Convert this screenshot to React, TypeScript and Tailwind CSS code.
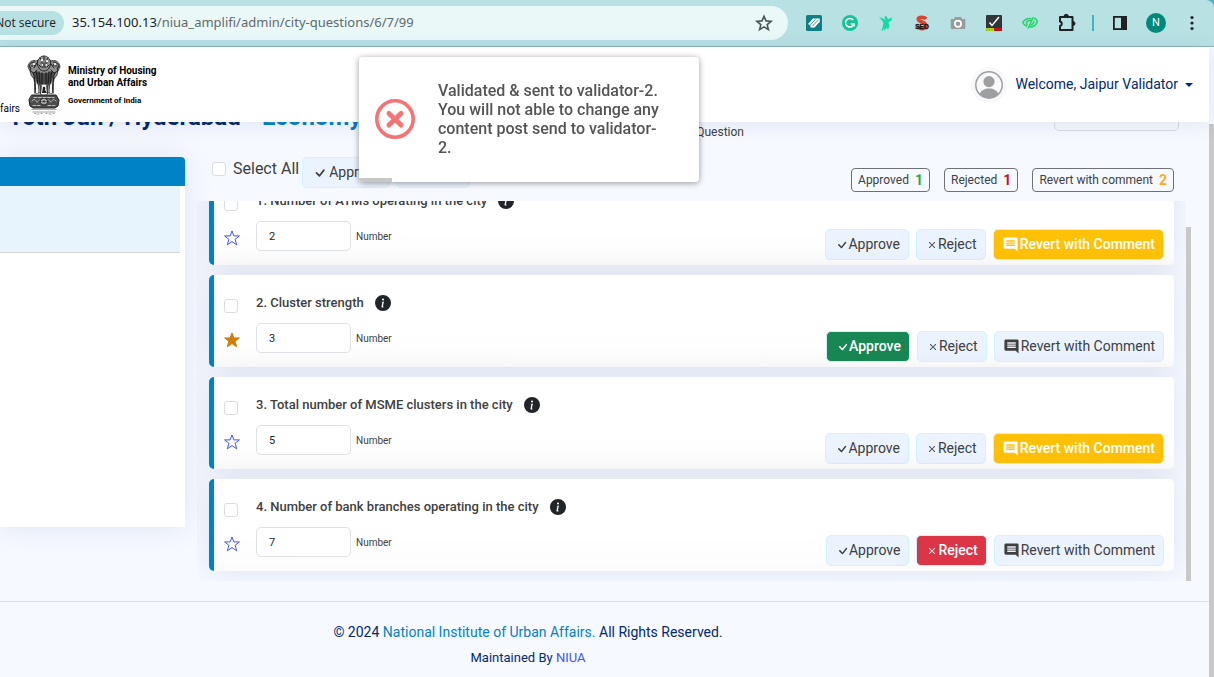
import React from "react";
import { BsCheck, BsX, BsInfoCircleFill } from "react-icons/bs";
import { MdComment } from "react-icons/md";

type Status = "approved" | "rejected" | "reverted";

interface Question {
  id: number;
  title: string;
  value: string;
  starred: boolean;
  status: Status;
}

const questions: Question[] = [
  { id: 1, title: "Number of ATMs operating in the city", value: "2", starred: false, status: "reverted" },
  { id: 2, title: "Cluster strength", value: "3", starred: true, status: "approved" },
  { id: 3, title: "Total number of MSME clusters in the city", value: "5", starred: false, status: "reverted" },
  { id: 4, title: "Number of bank branches operating in the city", value: "7", starred: false, status: "rejected" },
];

const idleButton = "border-[#cff4fc] bg-[#eaf3fe] text-[#404040]";
const checkbox =
  "block size-[14px] shrink-0 appearance-none rounded-[3px] border border-[#d9dce1] bg-white checked:bg-[#0082c6]";

function ExtensionCell({ label, children }: { label: string; children: React.ReactNode }) {
  return (
    <button type="button" aria-label={label} className="flex h-8 w-9 items-center justify-center">
      {children}
    </button>
  );
}

function BrowserBar() {
  return (
    <div className="bg-[#45b3bf]">
      <div className="flex h-[47px] items-center rounded-tr-lg border-b border-[#8db5b8] bg-[#b8e1e4] pr-1 font-['Noto_Sans',sans-serif]">
        <div className="flex h-[34px] min-w-0 flex-1 items-center rounded-r-full bg-[#ebf8f8] pr-3">
          <button
            type="button"
            className="flex h-6 w-16 shrink-0 items-center justify-end rounded-r-full bg-[#b8e1e4] pr-2 font-['Open_Sans',sans-serif] text-[12px] whitespace-nowrap text-[#202124]"
          >
            Not secure
          </button>
          <div className="ml-2 flex-1 truncate text-[13px] text-[#5f6b6d]">
            <span className="text-[#202124]">35.154.100.13</span>/niua_amplifi/admin/city-questions/6/7/99
          </div>
          <button type="button" aria-label="Bookmark this page">
            <svg viewBox="0 0 24 24" className="size-6" fill="none" stroke="#4b5557" strokeWidth="1.6">
              <path d="M12 5.2l2 4.7 5.1.4-3.9 3.3 1.2 5L12 15.900l-4.400 2.700 1.200-5-3.900-3.300 5.100-.4z" />
            </svg>
          </button>
        </div>
        <div className="ml-2 flex items-center">
          <ExtensionCell label="Reader">
            <svg viewBox="0 0 16 16" className="size-4">
              <rect width="16" height="16" rx="1.500" fill="#0e7f86" />
              <path d="M2 9L7 3.500 13.500 3.500 14 6.500 8.500 12.500 4.500 12.500 4.500 10.500z" fill="#fff" />
              <path d="M4 10.200L9.500 4.500M6.500 11L12.500 4.800" stroke="#0e7f86" strokeWidth=".8" />
            </svg>
          </ExtensionCell>
          <ExtensionCell label="Grammar checker">
            <svg viewBox="0 0 16 16" className="size-4">
              <circle cx="8" cy="8" r="8" fill="#15c39a" />
              <path d="M11.200 5a4.300 4.300 0 1 0 .8 4H8.800M12 8.400v3" fill="none" stroke="#fff" strokeWidth="1.500" />
            </svg>
          </ExtensionCell>
          <ExtensionCell label="Hummingbird">
            <svg viewBox="0 0 16 16" className="size-4" fill="#14dba5">
              <path d="M1 2l4 1.500L7.500 5 6.500 3 7 .5 9 2l1 2.500L12 3l3-.2-2 1.500 1.500 1-3 1-1 2 1 2.500-.5 1.500L10 15l-1-2-1 .5L6.500 16 6 13l-1.500 3-1-1L5 11l.5-3L4 5.500z" />
            </svg>
          </ExtensionCell>
          <ExtensionCell label="SEO tool">
            <svg viewBox="0 0 16 16" className="size-4">
              <path d="M12.200 3.800C11 2.300 5 1.300 4.300 3.800 4 7.500 11.500 6 11.800 10.500c0 4-6 4-8 1.500" fill="none" stroke="#dc4430" strokeWidth="3.600" />
              <text x="8" y="14" textAnchor="middle" fontSize="6.500" fontWeight="900" fontFamily="Liberation Sans, sans-serif" fill="#1a1212" stroke="#1a1212" strokeWidth=".4">
                SEO
              </text>
            </svg>
          </ExtensionCell>
          <ExtensionCell label="Screenshot">
            <svg viewBox="0 0 16 16" className="size-4">
              <path d="M5 2h6l1 2h2.500a.8.800 0 0 1 .8.800V13a1 1 0 0 1-1 1H1.700a1 1 0 0 1-1-1V4.800A.8.800 0 0 1 1.500 4H4z" fill="#979b9c" />
              <circle cx="8" cy="8.800" r="3.100" fill="none" stroke="#fff" strokeWidth="1.700" />
            </svg>
          </ExtensionCell>
          <ExtensionCell label="Checker">
            <svg viewBox="0 0 16 16" className="size-4">
              <rect width="16" height="16" rx="1" fill="#333638" />
              <path d="M0 13h8v3H1a1 1 0 0 1-1-1z" fill="#a4d21c" />
              <path d="M8 13h8v2a1 1 0 0 1-1 1H8z" fill="#c4121a" />
              <path d="M3.500 7.500l2.500 3L13 2" fill="none" stroke="#fff" strokeWidth="1.400" />
            </svg>
          </ExtensionCell>
          <ExtensionCell label="Visibility">
            <svg viewBox="0 0 16 16" className="size-4" fill="none" stroke="#25d366" strokeWidth="1.500">
              <path d="M9.500 3.700C5 3 2 5.500.8 7.500c.8 2 2.200 3.200 4.200 4M12 3.500c2.500 0 3 1.500 3.200 3-.7 3.500-4 5.500-7.700 5.500M11.500 2L6 13.500M9 5.500C6.500 5 4.500 6.500 4.500 8c0 .8.500 1.500 1.200 2M11.500 5.800C12.500 7 11 9.500 8.800 10" />
            </svg>
          </ExtensionCell>
          <ExtensionCell label="Extensions">
            <svg viewBox="0 0 20 20" className="size-5" fill="none" stroke="#202124" strokeWidth="2" strokeLinejoin="round">
              <path d="M4 4h12.500v13H4v-4a2.300 2.300 0 0 0 0-4.500z" />
              <path d="M8 3.500a2.200 2.200 0 0 1 4.400 0zM17 8.500a2 2 0 0 1 0 4z" fill="#202124" strokeWidth="1" />
            </svg>
          </ExtensionCell>
          <span className="mx-2 h-4 w-[2px] bg-[#45b3bf]" />
          <ExtensionCell label="Side panel">
            <svg viewBox="0 0 16 16" className="size-4">
              <rect x="1.900" y="1.900" width="12.200" height="12.200" fill="none" stroke="#202124" strokeWidth="1.800" />
              <rect x="9" y="1.900" width="5.500" height="12.200" fill="#202124" />
            </svg>
          </ExtensionCell>
          <ExtensionCell label="Profile">
            <span className="flex size-5 items-center justify-center rounded-full bg-[#00897b] font-[Roboto,sans-serif] text-[11px] text-white">
              N
            </span>
          </ExtensionCell>
          <ExtensionCell label="Menu">
            <svg viewBox="0 0 16 16" className="size-4" fill="#202124">
              <circle cx="8" cy="2.500" r="1.600" />
              <circle cx="8" cy="8" r="1.600" />
              <circle cx="8" cy="13.500" r="1.600" />
            </svg>
          </ExtensionCell>
        </div>
      </div>
    </div>
  );
}

function Emblem() {
  return (
    <svg viewBox="0 0 36 60" className="h-[60px] w-9 shrink-0" fill="none" stroke="#222" strokeLinecap="round">
      <path d="M13 4c1-4 9-4 10 0l2 2c5-2 9 2 9 6l-2 4-1 4-3 4-1 6-1 8H10l-1-8-1-6-3-4-1-4-2-4c0-4 4-8 9-6z" fill="#8f8f8f" strokeWidth=".8" strokeDasharray="2 1" />
      <path d="M11 16c3 3 11 3 14 0l3 2-2 8-4 3h-8l-4-3-2-8z" fill="#4a4a4a" stroke="none" />
      <g strokeWidth="1">
        <path d="M12 5c-1 3-1 5 1 8 1 2 3 3 5 3s4-1 5-3c2-3 2-5 1-8M14 3l2 3M18 1v4M22 3l-2 3M15 8h1.500M19.500 8H21M16 12h4M18 8v3M13 10l2 2M23 10l-2 2" />
        <path d="M9 7c-3 0-6 2-6 5l2 1-1 3 4 2 3-3M27 7c3 0 6 2 6 5l-2 1 1 3-4 2-3-3M5 11h2M29 11h2M11 8l-3 5M25 9l3 4M8 9l1 2M28 9l-1 2" />
        <path d="M7 18c2 3 1 6 2 9M10 17c2 4 1 8 2 12M13 17l1 13M16 18v11M20 18v11M23 17l-1 13M26 17c-2 4-1 8-2 12M29 18c-2 3-1 6-2 9" strokeWidth="1.300" strokeDasharray="3 1" />
        <path d="M9 29v9M12 30l-1 8M15 31v8M21 31v8M24 30l1 8M27 29v9" strokeWidth="1.400" />
      </g>
      <path d="M15 4h2v2h-2zM20 5h2v2h-2zM16 9h1v2h-1zM20 9h1v2h-1zM7 8h2v2H7zM28 8h2v2h-2z" fill="#e8e8e8" stroke="none" />
      <path d="M10 28l2 2v8h-2zM26 28l-2 2v8h2zM16 30h4l1 9h-6z" fill="#f4f4f4" stroke="none" />
      <path d="M17 32c2-1 3 1 2 3l2 3h-5z" fill="#222" stroke="none" />
      <path d="M6 40h24l3 5-1 6-3 2H7l-3-2-1-6z" fill="#4c4c4c" strokeWidth="1" />
      <circle cx="18" cy="46.500" r="3.600" fill="#ddd" strokeWidth="1" />
      <path d="M18 43v7M14.500 46.500h7M15.500 44l5 5M20.500 44l-5 5" strokeWidth=".6" />
      <path d="M6 46c1-2 3-2 4 0s2 1 3-1M23 45c1 2 2 3 3 1s2-2 4 0M8 42.500h20M7 50.500h7M22 50.500h7" stroke="#ddd" strokeWidth=".8" strokeDasharray="3 1.500" />
      <path d="M6 54.500h24" strokeWidth=".8" stroke="#999" />
      <path d="M7 57h22M8.500 58.500h1M11 59h2M15 58.500h1M20 58.500h1M23 59h2M27 58.500h1" stroke="#888" strokeWidth=".8" />
    </svg>
  );
}

function PageHeader() {
  return (
    <header className="relative z-10 flex h-[75px] items-center bg-white pr-4 shadow-[0_2px_20px_rgba(1,41,112,0.1)]">
      <div className="flex h-full items-start pt-2 text-black">
        <span className="mt-[46px] flex w-5 justify-end text-[10px] leading-4">fairs</span>
        <span className="ml-[6px]">
          <Emblem />
        </span>
        <div className="ml-[6px] pt-[10px] text-[10px] leading-3 font-bold whitespace-nowrap">
          <p>Ministry of Housing</p>
          <p>and Urban Affairs</p>
          <p className="mt-[6px] text-[8px] leading-3">Government of India</p>
        </div>
      </div>
      <button type="button" className="ml-auto flex items-center text-[14px] text-[#012970]">
        <span className="mr-2 flex size-9 items-center justify-center rounded-full bg-[#f6f8fb]">
          <svg viewBox="0 0 28 28" className="size-7">
            <circle cx="14" cy="14" r="13.200" fill="#fafafa" stroke="#9e9fa1" strokeWidth="1.500" />
            <circle cx="14" cy="10.600" r="5.600" fill="#9e9fa1" />
            <path d="M4.500 23c2.500-7.500 16.500-7.500 19 0a13 13 0 0 1-19 0z" fill="#9e9fa1" />
          </svg>
        </span>
        Welcome, Jaipur Validator
        <span className="ml-[7px] border-x-4 border-t-4 border-x-transparent border-t-[#012970]" />
      </button>
    </header>
  );
}

function StatusButton({ active, tone, children }: { active: boolean; tone: string; children: React.ReactNode }) {
  return (
    <button
      type="button"
      className={`flex h-[31px] items-center rounded-[5px] border px-2 text-[14px] whitespace-nowrap ${active ? tone : idleButton}`}
    >
      {children}
    </button>
  );
}

function QuestionCard({ q }: { q: Question }) {
  const field = `question-${q.id}`;
  return (
    <li className="flex h-[92px] rounded-[5px] border-l-[5px] border-[#0082c6] bg-linear-to-b from-white from-60% to-[#fcfcfc] pr-[10px] pl-[10px] shadow-[0_0_30px_rgba(1,41,112,0.1)]">
      <div className="flex w-4 flex-col pt-6">
        <input type="checkbox" aria-label={`Select question ${q.id}`} className={checkbox} />
        <button type="button" aria-label="Mark as important" className="mt-[19px]">
          <svg viewBox="0 0 16 16" className="size-4">
            <path
              d="M8 .9l1.900 5h5.500l-4.300 3.400 1.600 5.500L8 11.600l-4.700 3.200 1.600-5.500L.6 5.900h5.500z"
              fill={q.starred ? "#cf7d05" : "none"}
              stroke={q.starred ? "#cf7d05" : "#4154f1"}
              strokeWidth="1"
            />
          </svg>
        </button>
      </div>
      <div className="ml-4 flex-1 pt-5">
        <div className="flex h-4 items-center">
          <label htmlFor={field} className="text-[13px] font-medium text-[#404040]">
            {q.id}. {q.title}
          </label>
          <button type="button" aria-label="More information" className="ml-[11px]">
            <BsInfoCircleFill className="size-4 text-[#212529]" />
          </button>
        </div>
        <div className="mt-3 flex items-center">
          <input
            id={field}
            type="text"
            defaultValue={q.value}
            className="h-[30px] w-[95px] rounded-[5px] border border-[#dee2e6] bg-white px-3 text-[11px] text-[#212529]"
          />
          <span className="ml-[5px] text-[10px] text-[#404040]">Number</span>
        </div>
      </div>
      <div className="flex items-end gap-[7px] pb-[5px]">
        <StatusButton active={q.status === "approved"} tone="border-[#cff4fc] bg-[#198754] text-white font-medium">
          <BsCheck className="-mr-[2px] size-4" />
          Approve
        </StatusButton>
        <StatusButton active={q.status === "rejected"} tone="border-[#cff4fc] bg-[#dc3545] text-white font-medium">
          <BsX className="-mr-px size-[14px]" />
          Reject
        </StatusButton>
        <StatusButton active={q.status === "reverted"} tone="border-[#cff4fc] bg-[#ffc107] text-white font-medium">
          <MdComment className="mr-px size-[17px]" />
          Revert with Comment
        </StatusButton>
      </div>
    </li>
  );
}

function Tally({ label, count, color }: { label: string; count: number; color: string }) {
  return (
    <span className="flex h-6 items-center gap-[6px] rounded-[4px] border border-[#6f7275] px-[6px] text-[12px] whitespace-nowrap text-[#404040]">
      {label}
      <b className={`text-[14px] font-bold ${color}`}>{count}</b>
    </span>
  );
}

function Toast() {
  return (
    <div
      role="alert"
      className="fixed top-[57px] left-[359px] z-20 flex w-[340px] items-center overflow-hidden rounded-[4px] bg-white px-4 pt-6 pb-[25px] shadow-[0_1px_6px_rgba(0,0,0,0.4)]"
    >
      <svg viewBox="0 0 40 40" className="size-10 shrink-0" fill="none" stroke="#f57373" strokeLinecap="round">
        <circle cx="20" cy="20" r="18.200" strokeWidth="3.600" />
        <path d="M14 14.500l12 11.500M26 14.500L14 26" strokeWidth="5" />
      </svg>
      <p className="ml-[23px] w-[228px] text-[16px] leading-[19px] font-medium text-[#545454]">
        Validated &amp; sent to validator-2. You will not able to change any content post send to validator-2.
      </p>
      <span className="absolute bottom-0 left-0 h-1 w-[33px] bg-[#c7c7c7]" />
    </div>
  );
}

export default function App() {
  return (
    <div className="flex min-h-screen flex-col bg-[#f6f9ff] font-[Roboto,sans-serif]">
      <BrowserBar />
      <Toast />
      <div className="flex flex-1">
        <div className="flex min-w-0 flex-1 flex-col">
          <PageHeader />
          <main>
            <div className="-mt-[25px] flex h-[34px] items-center pr-[30px] pl-2">
              <h1 className="pt-[6px] text-[24px] leading-7 font-bold whitespace-nowrap text-[#012970]">
                16th Jun / Hyderabad - <span className="text-[#0082c6]">Economy</span>
              </h1>
              <span className="mr-[310px] -mb-9 ml-auto text-[12px] text-[#404040]">Question</span>
              <select
                aria-label="Filter"
                className="h-[34px] w-[125px] appearance-none rounded-[5px] border border-[#d9dce1] bg-[#f6f8fc]"
              />
            </div>
            <div className="mt-[26px] flex items-start">
              <aside className="h-[370px] w-[185px] shrink-0 rounded-tr-[4px] bg-white pr-[5px] shadow-[0_0_30px_rgba(1,41,112,0.1)]">
                <div className="-mr-[5px] h-[29px] rounded-tr-[4px] bg-[#0082c6]" />
                <div className="h-[67px] border-b border-[#d3d6d9] bg-[#e7f4fe]" />
              </aside>
              <section className="ml-3 min-w-0 flex-1">
                <div className="flex h-11 items-start pr-[17px] pl-[15px]">
                  <label className="flex h-6 items-center gap-[7px] text-[16px] whitespace-nowrap text-[#404040]">
                    <input type="checkbox" className={checkbox} />
                    Select All
                  </label>
                  <div className="ml-[3px] flex gap-[6px]">
                    <button type="button" className={`flex h-[31px] items-center rounded-[5px] border px-2 text-[14px] ${idleButton}`}>
                      <BsCheck className="size-[18px]" />
                      Approve
                    </button>
                    <button type="button" className={`flex h-[31px] items-center rounded-[5px] border px-2 text-[14px] ${idleButton}`}>
                      <BsX className="size-[18px]" />
                      Reject
                    </button>
                  </div>
                  <div className="mt-[11px] ml-auto flex gap-[14px]">
                    <Tally label="Approved" count={1} color="text-[#1fb141]" />
                    <Tally label="Rejected" count={1} color="text-[#c4122f]" />
                    <Tally label="Revert with comment" count={2} color="text-[#ffa91f]" />
                  </div>
                </div>
                <div className="flex h-[380px]">
                  <div className="min-w-0 flex-1 overflow-hidden px-3">
                    <ul className="-mt-7 flex flex-col gap-[10px]">
                      {questions.map((q) => (
                        <QuestionCard key={q.id} q={q} />
                      ))}
                    </ul>
                  </div>
                  <div className="w-[5px] pt-[26px]">
                    <div className="h-full bg-[#c8c8c8]" />
                  </div>
                </div>
              </section>
              <div className="w-[18px] shrink-0" />
            </div>
          </main>
          <footer className="mt-5 border-t border-[#cddfff] pt-[22px] pr-[153px] text-center text-[#012970]">
            <p className="text-[14px] leading-4">
              © 2024{" "}
              <a href="#niua" className="text-[#0082c6]">
                National Institute of Urban Affairs.
              </a>{" "}
              All Rights Reserved.
            </p>
            <p className="mt-[10px] text-[13px] leading-4">
              Maintained By{" "}
              <a href="#niua" className="text-[#4154f1]">
                NIUA
              </a>
            </p>
          </footer>
        </div>
        <div className="w-[5px] shrink-0 pt-[77px]">
          <div className="h-full bg-[#c8c8c8]" />
        </div>
      </div>
    </div>
  );
}
